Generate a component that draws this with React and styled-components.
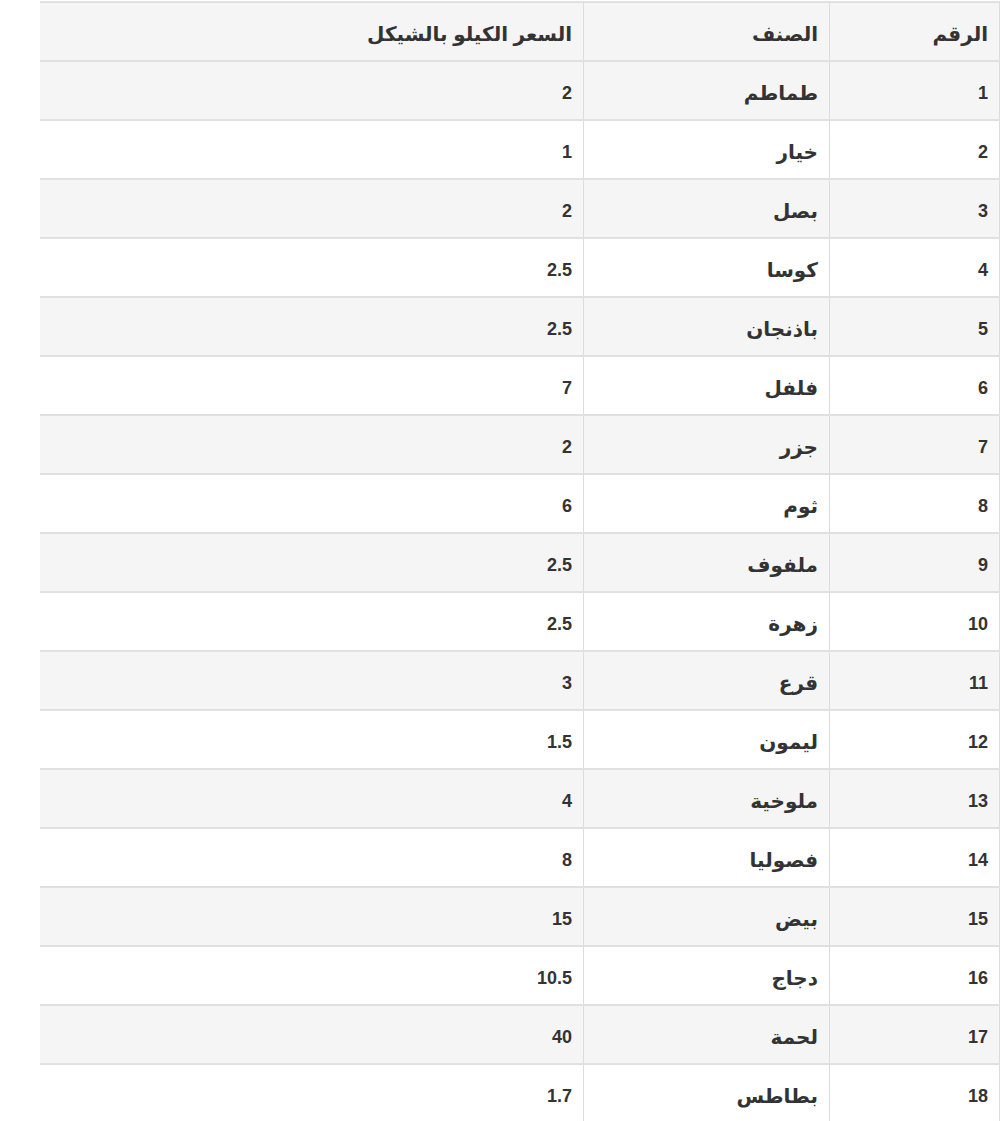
import styled, { createGlobalStyle } from "styled-components";

const GlobalStyle = createGlobalStyle`
    body {
        margin: 0;
        background: #ffffff;
        font-family: "Liberation Sans", "DejaVu Sans", Arial, sans-serif;
    }
`

const items = [
    ["1", "طماطم", "2"],
    ["2", "خيار", "1"],
    ["3", "بصل", "2"],
    ["4", "كوسا", "2.5"],
    ["5", "باذنجان", "2.5"],
    ["6", "فلفل", "7"],
    ["7", "جزر", "2"],
    ["8", "ثوم", "6"],
    ["9", "ملفوف", "2.5"],
    ["10", "زهرة", "2.5"],
    ["11", "قرع", "3"],
    ["12", "ليمون", "1.5"],
    ["13", "ملوخية", "4"],
    ["14", "فصوليا", "8"],
    ["15", "بيض", "15"],
    ["16", "دجاج", "10.5"],
    ["17", "لحمة", "40"],
    ["18", "بطاطس", "1.7"],
]

export default function App() {
    return (
        <>
            <GlobalStyle />
            <Table>
                <thead>
                    <Row striped>
                        <Cell as="th" width={170} arabic>الرقم</Cell>
                        <Cell as="th" width={246} arabic>الصنف</Cell>
                        <Cell as="th" arabic>السعر الكيلو بالشيكل</Cell>
                    </Row>
                </thead>
                <tbody>
                    {items.map((item, i) => (
                        <Row key={item[0]} striped={i % 2 === 0}>
                            <Cell>{item[0]}</Cell>
                            <Cell arabic>{item[1]}</Cell>
                            <Cell>{item[2]}</Cell>
                        </Row>
                    ))}
                </tbody>
            </Table>
        </>
    )
}

const Table = styled.table`
    direction: rtl;
    width: 960px;
    margin: 1px 0 0 40px;
    border-collapse: collapse;
    border-right: 1px solid #dcdcdc;
    table-layout: fixed;
`

const Row = styled.tr`
    background-color: ${props => props.striped ? "#f5f5f5" : "#ffffff"};
`

const Cell = styled.td`
    width: ${props => props.width ? props.width + "px" : "auto"};
    height: 57px;
    box-sizing: border-box;
    padding: 20px 11px 15px 11px;
    border-top: 2px solid #e0e0e0;
    border-left: 1px solid #dcdcdc;
    text-align: right;
    vertical-align: top;

    font-size: ${props => props.arabic ? "20px" : "18px"};
    line-height: 22px;
    font-weight: 700;
    color: #333333;

    &:last-child {
        border-left: 0;
    }
`
